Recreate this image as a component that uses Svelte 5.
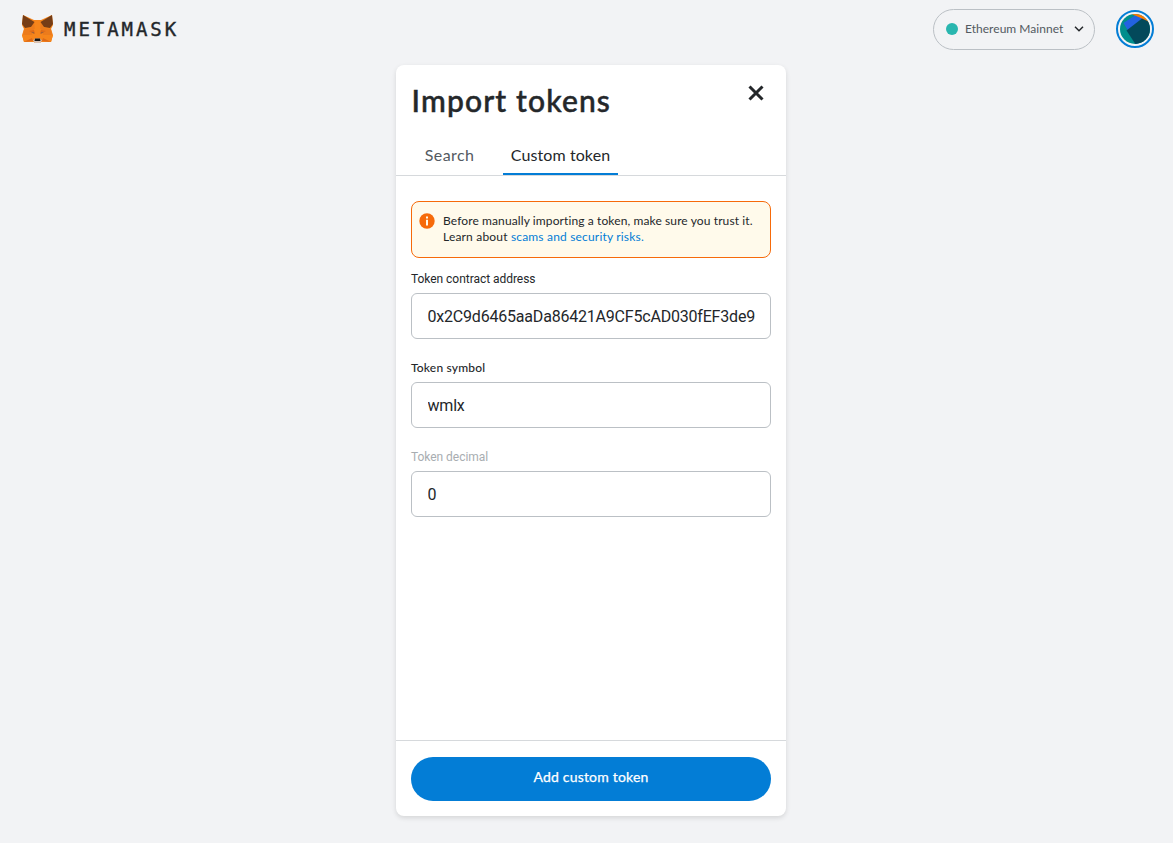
<script>
  let address = $state('0x2C9d6465aaDa86421A9CF5cAD030fEF3de9');
  let symbol = $state('wmlx');
  let decimals = $state('0');
</script>

<div class="app">
  <header>
    <div class="logo">
      <svg width="31" height="30" viewBox="0 0 31 30">
        <path fill="#f6851b" d="M1 1 12 6H19L30 1 31 11 29 15 31 21 29 28 20 27 18 29H13L11 27 2 28 0 21 2 15 0 11Z"/>
        <path fill="#ec7b1c" d="M2 15 9 14 12 7H19L22 14 29 15 30 21H21L19 15H12L10 21H1Z"/>
        <path fill="#f6851b" d="M12 6H19L18 18H13ZM0 21H10L13 28 2 28ZM31 21H21L18 28 29 28Z"/>
        <path fill="#763d16" d="M1 1 12.500 8 9 13 3 14 0 10ZM30 1 18.500 8 22 13 28 14 31 10Z"/>
        <path fill="#dd6a1a" d="M7 17 12 16 13 20ZM24 17 19 16 18 20ZM2 28 10 24 11 27ZM29 28 21 24 20 27Z"/>
        <path fill="#7a5a49" d="m9 18 3 .5.2 1.300ZM22 18l-3 .5-.2 1.300Z"/>
        <path fill="#d7c1b3" d="M11 26.500 13 24.500H18L20 26.500 18 29H13Z"/>
        <path fill="#161616" d="M13 24.500H18L18.500 27H12.500Z"/>
      </svg>
      <span class="wordmark">METAMASK</span>
    </div>
    <div class="account">
      <button class="network">
        <i class="dot"></i>
        <span>Ethereum Mainnet</span>
        <svg width="12" height="8" viewBox="0 0 12 8"><path d="m2 1.800 4 4 4-4" fill="none" stroke="#24272a" stroke-width="1.500"/></svg>
      </button>
      <div class="avatar">
        <svg width="30" height="30" viewBox="0 0 30 30">
          <defs><clipPath id="disc"><circle cx="15" cy="15" r="15"/></clipPath></defs>
          <g clip-path="url(#disc)">
            <path fill="#018e8c" d="M0 0H30V30H0Z"/>
            <path fill="#fa7900" d="M10 -1H31V10L21 5Z"/>
            <path fill="#2362e1" d="M3.500 9 15 1.500 22 4.500 21 10 17 32 14.500 28 10 20Z"/>
            <path fill="#03495b" d="M6.500 16.500 22 4.500 34 10V34H18Z"/>
          </g>
        </svg>
      </div>
    </div>
  </header>

  <main>
    <div class="heading">
      <h1>Import tokens</h1>
      <button class="close" aria-label="Close">
        <svg width="16" height="16" viewBox="0 0 16 16"><path d="m1.500 1.500 13 13m0-13-13 13" stroke="#24272a" stroke-width="3"/></svg>
      </button>
    </div>
    <nav>
      <button class="tab search">Search</button>
      <button class="tab active">Custom token</button>
    </nav>
    <section>
      <div class="alert">
        <svg width="16" height="16" viewBox="0 0 16 16"><circle cx="8" cy="8" r="7.700" fill="#f66a0a"/><path fill="#fffaeb" d="M7 3.600h2v2H7zM7 6.800h2v5.600H7z"/></svg>
        <div>
          <p class="warn">Before manually importing a token, make sure you trust it.</p>
          <p class="learn">Learn about <a href="#risks">scams and security risks.</a></p>
        </div>
      </div>
      <label><span class="cap">Token contract address</span><input bind:value={address} /></label>
      <label><span class="cap geo">Token symbol</span><input bind:value={symbol} /></label>
      <label><span class="cap muted">Token decimal</span><input bind:value={decimals} /></label>
    </section>
    <footer><button class="submit"><span>Add custom token</span></button></footer>
  </main>
</div>

<style>
  :global(body) { margin: 0; background: #f2f3f5; }
  .app { height: 843px; overflow: hidden; background: #f2f3f5; color: #24272a; font-family: Lato, sans-serif; }
  .app * { box-sizing: border-box; }
  button { border: 0; padding: 0; background: none; font-family: inherit; color: inherit; }
  svg { display: block; flex: none; }
  header { height: 65px; padding: 9px 19px 0 22px; display: flex; justify-content: space-between; align-items: flex-start; }
  .logo { display: flex; align-items: center; padding-top: 5px; gap: 11px; }
  .wordmark { font: 19px/30px "DejaVu Sans Mono", monospace; letter-spacing: 2.950px; -webkit-text-stroke: .4px #24272a; }
  .account { display: flex; align-items: flex-start; gap: 21px; }
  .network { width: 162px; height: 41px; border: 1px solid #bbc0c5; border-radius: 21px; display: flex; align-items: center; padding: 0 9.500px 2px 12px; font-size: 12px; color: #535a61; }
  .network span { margin-left: 7px; letter-spacing: .03px; white-space: nowrap; }
  .network svg { margin-left: auto; }
  .dot { width: 12px; height: 12px; border-radius: 50%; background: #29b6af; }
  .avatar { width: 38px; height: 38px; margin-top: 1px; border: 2px solid #037dd6; border-radius: 50%; padding: 2px; }
  main { width: 390px; height: 751px; margin: 0 auto 0 396px; background: #fff; border-radius: 8px; box-shadow: 0 2px 5px #0000001f; display: flex; flex-direction: column; }
  .heading { display: flex; justify-content: space-between; padding: 15px 22.500px 0 15.500px; height: 72px; }
  h1 { margin: 0; font-size: 30px; line-height: 40px; font-weight: 500; letter-spacing: 1.150px; -webkit-text-stroke: .5px #24272a; white-space: nowrap; }
  .close { align-self: flex-start; margin-top: 5px; }
  nav { height: 39px; border-bottom: 1px solid #d6d9dc; display: flex; gap: 21px; padding-left: 21px; }
  .tab { height: 38px; padding: 0 7px; font-size: 16px; line-height: 36px; border-bottom: 2px solid transparent; color: #535a61; white-space: nowrap; }
  .search { width: 65px; letter-spacing: .4px; }
  .active { width: 115px; color: #24272a; border-color: #037dd6; letter-spacing: .1px; }
  section { flex: 1; padding: 25px 15px 0; }
  .alert { height: 57px; border: 1px solid #f66a0a; border-radius: 8px; background: #fffaeb; display: flex; gap: 8px; padding: 11px 7px 0; }
  .alert p { margin: 0; font-size: 12px; line-height: 16px; white-space: nowrap; }
  .warn { letter-spacing: .11px; }
  .learn { letter-spacing: .18px; }
  a { color: #037dd6; text-decoration: none; }
  label { display: block; padding-top: 13px; }
  label + label { padding-top: 21px; }
  .cap { display: block; height: 22px; font: 12px/16px Roboto, sans-serif; letter-spacing: -.04px; }
  .geo { font-family: Lato, sans-serif; font-weight: 500; letter-spacing: .18px; }
  .muted { color: #a8adb1; }
  input { display: block; width: 100%; height: 46px; border: 1px solid #bbc0c5; border-radius: 6px; padding: 0 14px 0 15.500px; font: 16px Roboto, sans-serif; letter-spacing: -.2px; color: #24272a; outline: 0; background: #fff; }
  footer { height: 76px; border-top: 1px solid #d6d9dc; padding: 16px 15px 0; }
  .submit { display: block; width: 360px; height: 44px; border-radius: 22px; background: #037dd6; color: #fff; font-size: 14px; line-height: 18px; padding-bottom: 4px; letter-spacing: .2px; -webkit-text-stroke: .25px #fff; }
</style>
